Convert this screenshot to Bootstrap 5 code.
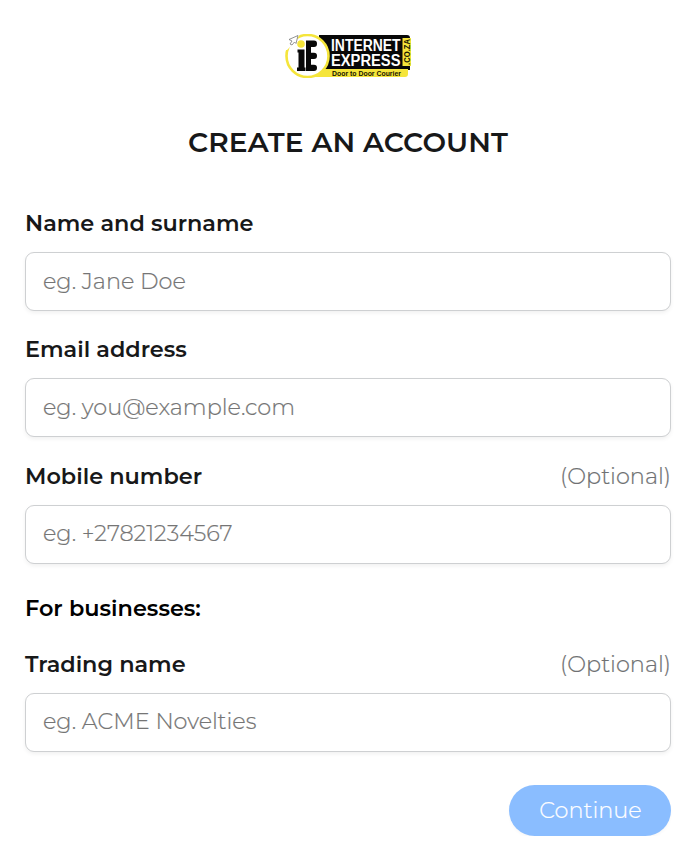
<!DOCTYPE html>
<html lang="en">
<head>
<meta charset="utf-8">
<meta name="viewport" content="width=device-width, initial-scale=1">
<title>Create an account</title>
<link href="https://cdn.jsdelivr.net/npm/bootstrap@5.3.0/dist/css/bootstrap.min.css" rel="stylesheet">
<style>
body{font-family:Montserrat,Inter,"Open Sans",sans-serif;font-size:22.4px;color:#171819;background:#fff}
.signup{padding:34px 23px 0 25px}
.brand-logo{width:126px;height:44px}
.page-title{font-size:28px;line-height:34px;font-weight:600;margin:47px 0 48px;letter-spacing:.1px}
.field{margin-bottom:23px}
.field-head{height:33px;line-height:33px;margin-bottom:12px}
.field-label,.section-label{font-weight:600;font-size:22.4px;line-height:33px}
.section-label{color:#000;margin:28.8px 0 23px}
.optional{font-weight:300;color:#6f7173;-webkit-text-stroke:.2px}
.field-input{height:59px;margin-bottom:-.6px;padding:0 17px 1px;border:1px solid #ced0d2;border-radius:9px;font-size:22.4px;font-weight:300;box-shadow:0 2px 4px rgba(0,0,0,.06)}
.field-input[type=tel],#trading{padding-bottom:3px}
.field-input::placeholder{color:#757575;opacity:1;-webkit-text-stroke:.2px}
.btn-continue{width:162px;height:51px;padding:1px 0 0 1px;font-size:22.4px;font-weight:300;color:#fff;background:#8abdff;margin-top:10.2px;box-shadow:0 2px 3px rgba(0,0,0,.03);-webkit-text-stroke:.2px}
</style>
</head>
<body>
<main class="signup">
  <div class="d-flex justify-content-center">
    <svg class="brand-logo" viewBox="0 0 126 44" role="img" aria-label="Internet Express">
      <path d="M34 1H122Q125 1 125 4V36H34Z" fill="#080808"/>
      <path d="M30 35H123V40Q123 43 120 43H30Z" fill="#f5e53b"/>
      <path d="M117.500 4H126V32H117.500Z" fill="#f5e53b"/>
      <circle cx="22.500" cy="22" r="21" fill="#fff" stroke="#f5e53b" stroke-width="2.6"/>
      <path d="M0 0H15L11 7L2 16H0Z" fill="#fff"/>
      <path d="M13 1.500L4 5.500L7 7L5 10L7 11L9.500 8L11 9.500Z" fill="#fff" stroke="#777" stroke-width=".8"/>
      <circle cx="16" cy="10" r="3.8" fill="#f5e53b"/>
      <path d="M12.500 15.500H19.500V33.500H20.500V37H12V33.500H13.500V18.500H12.500Z" fill="#080808"/>
      <path d="M21 6.500H29Q32 6.500 32 9.700Q32 13 29 13H26V18.700H29Q32 18.700 32 21.800Q32 25 29 25H26V30.700H29Q32 30.700 32 33.800Q32 37 29 37H21Z" fill="#080808"/>
      <g font-family="Liberation Sans, sans-serif" font-weight="700">
        <g fill="#fff" font-size="16">
          <text x="46" y="16.500" textLength="69.500" lengthAdjust="spacingAndGlyphs">INTERNET</text>
          <text x="46" y="32.300" textLength="69.500" lengthAdjust="spacingAndGlyphs">EXPRESS</text>
        </g>
        <text x="47" y="41.500" font-size="7" textLength="69" lengthAdjust="spacingAndGlyphs" fill="#171500">Door to Door Courier</text>
        <text transform="translate(124.500 31) rotate(-90)" font-size="8.500" textLength="26" lengthAdjust="spacingAndGlyphs" fill="#171500">.CO.ZA</text>
      </g>
    </svg>
  </div>
  <h1 class="page-title text-center">CREATE AN ACCOUNT</h1>
  <form>
    <div class="field">
      <div class="field-head d-flex justify-content-between"><label class="field-label" for="fullName">Name and surname</label></div>
      <input class="form-control field-input" id="fullName" type="text" placeholder="eg. Jane Doe">
    </div>
    <div class="field">
      <div class="field-head d-flex justify-content-between"><label class="field-label" for="email">Email address</label></div>
      <input class="form-control field-input" id="email" type="email" placeholder="eg. you@example.com">
    </div>
    <div class="field">
      <div class="field-head d-flex justify-content-between"><label class="field-label" for="mobile">Mobile number</label><span class="optional">(Optional)</span></div>
      <input class="form-control field-input" id="mobile" type="tel" placeholder="eg. +27821234567">
    </div>
    <div class="section-label">For businesses:</div>
    <div class="field">
      <div class="field-head d-flex justify-content-between"><label class="field-label" for="trading">Trading name</label><span class="optional">(Optional)</span></div>
      <input class="form-control field-input" id="trading" type="text" placeholder="eg. ACME Novelties">
    </div>
    <div class="d-flex justify-content-end"><button class="btn btn-continue rounded-pill" type="button">Continue</button></div>
  </form>
</main>
<script src="https://cdn.jsdelivr.net/npm/bootstrap@5.3.0/dist/js/bootstrap.bundle.min.js"></script>
</body>
</html>
